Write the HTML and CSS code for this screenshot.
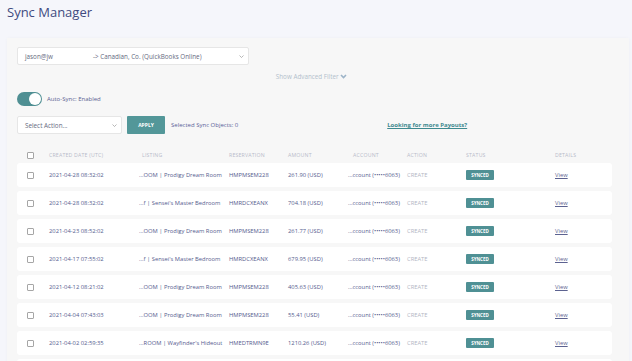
FILE: index.html
```html
<!DOCTYPE html>
<html lang="en">
<head>
    <meta charset="UTF-8">
    <title>Sync Manager</title>
    <link rel="stylesheet" href="styles.css">
</head>
<body>
    <h1 class="page-title">Sync Manager</h1>

    <div class="card">
        <div class="select wide">
            <span class="sel-user">jason@jw</span>
            <span class="sel-target">-&gt; Canadian, Co. (QuickBooks Online)</span>
            <svg class="caret" width="5" height="3" viewBox="0 0 5 3"><polyline points="0.5,0.5 2.5,2.5 4.5,0.5" fill="none" stroke="#999" stroke-width="0.7"/></svg>
        </div>

        <div class="adv-filter">
            Show Advanced Filter
            <svg width="7" height="5" viewBox="0 0 7 5"><polyline points="1,1 3.5,3.5 6,1" fill="none" stroke="#9db4c8" stroke-width="1.6"/></svg>
        </div>

        <div class="toggle-row">
            <span class="toggle"><span class="knob"></span></span>
            <span class="toggle-label">Auto-Sync: Enabled</span>
        </div>

        <div class="action-bar">
            <div class="select narrow">
                <span>Select Action...</span>
                <svg class="caret" width="5" height="3" viewBox="0 0 5 3"><polyline points="0.5,0.5 2.5,2.5 4.5,0.5" fill="none" stroke="#999" stroke-width="0.7"/></svg>
            </div>
            <button class="apply">APPLY</button>
            <span class="selected">Selected Sync Objects: 0</span>
            <a class="payouts" href="#">Looking for more Payouts?</a>
        </div>

        <div class="table">
            <div class="row head">
                <span class="cb"></span>
                <span>Created Date (UTC)</span>
                <span class="h-listing">Listing</span>
                <span>Reservation</span>
                <span>Amount</span>
                <span class="h-account">Account</span>
                <span>Action</span>
                <span>Status</span>
                <span>Details</span>
            </div>
            <div id="rows"></div>
            <div class="row item"></div>
        </div>
    </div>

    <script>
        const data = [
            ['2021-04-28 08:32:02', '...OOM | Prodigy Dream Room', 'HMPMSEM228', '261.90 (USD)'],
            ['2021-04-28 08:32:02', '...f | Sensei\'s Master Bedroom', 'HMRDCXEANX', '704.18 (USD)'],
            ['2021-04-23 08:52:02', '...OOM | Prodigy Dream Room', 'HMPMSEM228', '261.77 (USD)'],
            ['2021-04-17 07:55:02', '...f | Sensei\'s Master Bedroom', 'HMRDCXEANX', '679.95 (USD)'],
            ['2021-04-12 08:21:02', '...OOM | Prodigy Dream Room', 'HMPMSEM228', '405.63 (USD)'],
            ['2021-04-04 07:43:03', '...OOM | Prodigy Dream Room', 'HMPMSEM228', '55.41 (USD)'],
            ['2021-04-02 02:59:35', '...ROOM | Wayfinder\'s Hideout', 'HMEDTRMN9E', '1210.26 (USD)']
        ];

        const rowsEl = document.getElementById('rows');
        data.forEach(d => {
            const row = document.createElement('div');
            row.className = 'row item';
            row.innerHTML = `
                <span class="cb"></span>
                <span>${d[0]}</span>
                <span class="listing">${d[1]}</span>
                <span>${d[2]}</span>
                <span>${d[3]}</span>
                <span>...ccount (&bull;&bull;&bull;&bull;&bull;6063)</span>
                <span class="muted">CREATE</span>
                <span><span class="badge">SYNCED</span></span>
                <span><a class="view" href="#">View</a></span>`;
            rowsEl.appendChild(row);
        });
    </script>
</body>
</html>
```

FILE: styles.css
```css
body {
    margin: 0;
    background: #f5f6fb;
    font-family: 'Open Sans', sans-serif;
    color: #555b8e;
    overflow: hidden;
}

.page-title {
    margin: 0;
    padding: 3px 7px 0;
    height: 35px;
    font-size: 13px;
    font-weight: 400;
    color: #404a80;
}

.card {
    margin: 0 3px 0 7px;
    background: #f7f7f7;
    padding: 9px 17px 0 10px;
    height: 400px;
    box-shadow: 0 0 3px rgba(0, 0, 0, 0.03);
}

.select {
    display: flex;
    align-items: center;
    height: 18px;
    box-sizing: border-box;
    background: white;
    border: 1px solid #e6e6e6;
    border-radius: 2px;
    padding: 0 4px 0 7px;
    font-size: 6.3px;
    color: #666a80;
}

.select.wide {
    width: 232px;
}

.select.narrow {
    width: 105px;
}

.sel-user {
    width: 68px;
}

.caret {
    margin-left: auto;
}

.adv-filter {
    text-align: center;
    margin: 7px 0 0 -6px;
    font-size: 6.3px;
    color: #b3bfcc;
    height: 12px;
}

.toggle-row {
    display: flex;
    align-items: center;
    margin-top: 8px;
    height: 14px;
}

.toggle {
    width: 25px;
    height: 14px;
    border-radius: 7px;
    background: #4f8f93;
    position: relative;
}

.knob {
    position: absolute;
    right: 1px;
    top: 1px;
    width: 12px;
    height: 12px;
    border-radius: 50%;
    background: white;
}

.toggle-label {
    margin-left: 5px;
    font-size: 6px;
    color: #5a5f92;
}

.action-bar {
    display: flex;
    align-items: center;
    margin-top: 10px;
}

.apply {
    margin-left: 5px;
    width: 38px;
    height: 18px;
    border: none;
    border-radius: 1px;
    background: #539799;
    color: white;
    font-family: 'Open Sans', sans-serif;
    font-size: 5px;
    font-weight: 700;
    padding: 0;
}

.selected {
    margin-left: 6px;
    font-size: 6px;
    color: #5a5f98;
}

.payouts {
    margin-left: 149px;
    font-size: 6px;
    font-weight: 700;
    color: #3f8a90;
}

.table {
    margin-top: 13px;
}

.row {
    display: grid;
    grid-template-columns: 22px 90px 90px 59px 60px 59px 59px 89px 1fr;
    align-items: center;
    padding-left: 10px;
    font-size: 5.8px;
    white-space: nowrap;
}

.row.head {
    height: 16px;
    font-size: 5.2px;
    letter-spacing: 0.2px;
    text-transform: uppercase;
    color: #b7bbca;
}

.h-listing {
    padding-left: 3px;
}

.h-account {
    padding-left: 5px;
}

.row.item {
    height: 24px;
    margin-bottom: 4px;
    background: white;
    border-radius: 3px;
}

.cb {
    width: 5px;
    height: 5px;
    border: 0.8px solid #a6a6a6;
    border-radius: 1px;
    background: white;
}

.muted {
    color: #b3b6c4;
}

.badge {
    display: inline-block;
    width: 28px;
    height: 10px;
    line-height: 10px;
    text-align: center;
    background: #4f9094;
    color: white;
    font-size: 4.5px;
    font-weight: 700;
    border-radius: 1px;
}

.view {
    color: #5c6290;
}
```
